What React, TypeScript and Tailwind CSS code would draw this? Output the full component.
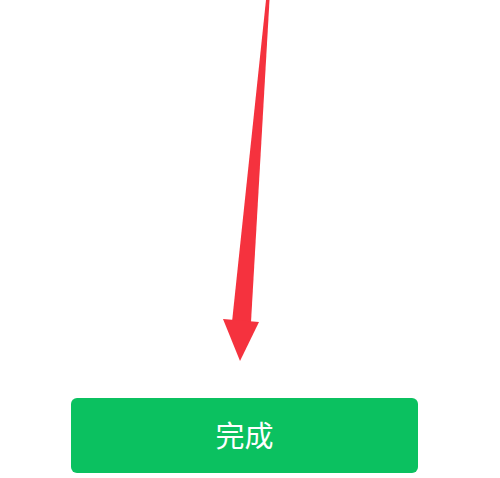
export default function App() {
  return (
    <div className="w-[500px] h-[478px] bg-white flex flex-col font-['Liberation_Sans','Noto_Sans_CJK_SC',sans-serif]">
      {/* pointer arrow */}
      <svg width="500" height="398" viewBox="0 0 500 398" className="block shrink-0">
        <polygon points="266,0 269.5,0 251,322 232,322" fill="#f5323e" />
        <polygon points="223,319 259,322 240,361" fill="#f5323e" />
      </svg>
      <div className="ml-[71px] w-[347px] h-[75px] rounded-[6px] bg-[#0bc160] flex items-center justify-center">
        <span className="text-white text-[29px] leading-none pt-[3px]">完成</span>
      </div>
    </div>
  )
}
